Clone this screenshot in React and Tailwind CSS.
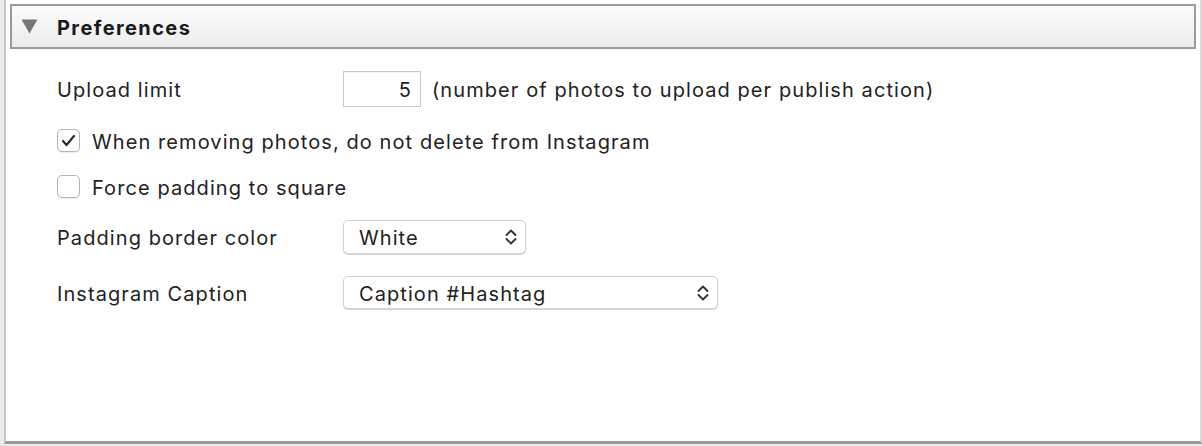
import React from "react";

const font = { fontFamily: "Inter, 'Open Sans', 'Liberation Sans', sans-serif" };

function Chevrons() {
  return (
    <svg width="14" height="20" viewBox="0 0 14 20" fill="none" stroke="#333" strokeWidth="1.9" strokeLinecap="round" strokeLinejoin="round">
      <path d="M2.5 8 L7 3.5 L11.5 8" />
      <path d="M2.5 12 L7 16.5 L11.5 12" />
    </svg>
  );
}

function Select({ label, width }) {
  return (
    <div className={`${width} h-full flex items-center justify-between pl-[15px] pr-[7px] bg-white border border-[#d2d2d2] rounded-[5px] shadow-[0_1px_1px_rgba(0,0,0,0.18)]`}>
      <span className="pt-[2px]">{label}</span>
      <Chevrons />
    </div>
  );
}

function Checkbox({ checked }) {
  return (
    <div className="w-[23px] h-[23px] rounded-[5px] border border-[#b5b5b5] bg-white shadow-[0_1px_1px_rgba(0,0,0,0.08)] flex items-center justify-center">
      {checked && (
        <svg width="15" height="13" viewBox="0 0 15 13" fill="none" stroke="#2a2a2a" strokeWidth="2.2" strokeLinecap="round" strokeLinejoin="round">
          <path d="M2 7 L5.5 11 L13 2" />
        </svg>
      )}
    </div>
  );
}

export default function App() {
  return (
    <div className="w-[1202px] h-[446px] bg-[#ececec] flex pl-[4px]" style={font}>
      <div className="flex-1 h-[444px] bg-white border-l-2 border-l-[#c8c8c8] border-b-[3px] border-b-[#9a9a9a] border-r-2 border-r-[#dadada] flex flex-col pt-[4px]">
        <div className="ml-[4px] mr-[4px] h-[45px] border-2 border-[#9b9b9b] bg-gradient-to-b from-[#fcfcfc] to-[#ececec] flex items-center">
          <svg className="ml-[9px]" width="17" height="15" viewBox="0 0 17 15">
            <path d="M0.5 0.5 L16.5 0.5 L8.5 14.5 Z" fill="#777" />
          </svg>
          <span className="ml-[19px] pt-[3px] text-[20px] font-bold text-[#1a1a1a] tracking-[1.4px]">Preferences</span>
        </div>

        <div className="pl-[51px] flex flex-col text-[20px] text-[#222] tracking-[1.08px]">
          <div className="mt-[22px] h-[36px] flex items-center">
            <span className="w-[286px] pt-[2px]">Upload limit</span>
            <div className="w-[78px] h-full border border-[#c9c9c9] bg-white flex items-center justify-end pr-[8px] pt-[2px] shadow-[inset_0_1px_0_rgba(0,0,0,0.04)]">5</div>
            <span className="ml-[11px] pt-[2px]">(number of photos to upload per publish action)</span>
          </div>

          <div className="mt-[22px] h-[23px] flex items-center">
            <Checkbox checked />
            <span className="ml-[12px] pt-[2px]">When removing photos, do not delete from Instagram</span>
          </div>

          <div className="mt-[23px] h-[23px] flex items-center">
            <Checkbox />
            <span className="ml-[12px] pt-[2px]">Force padding to square</span>
          </div>

          <div className="mt-[22px] h-[34px] flex items-center">
            <span className="w-[286px] pt-[2px]">Padding border color</span>
            <Select label="White" width="w-[183px]" />
          </div>

          <div className="mt-[22px] h-[33px] flex items-center">
            <span className="w-[286px] pt-[2px]">Instagram Caption</span>
            <Select label="Caption #Hashtag" width="w-[375px]" />
          </div>
        </div>
      </div>
    </div>
  );
}
